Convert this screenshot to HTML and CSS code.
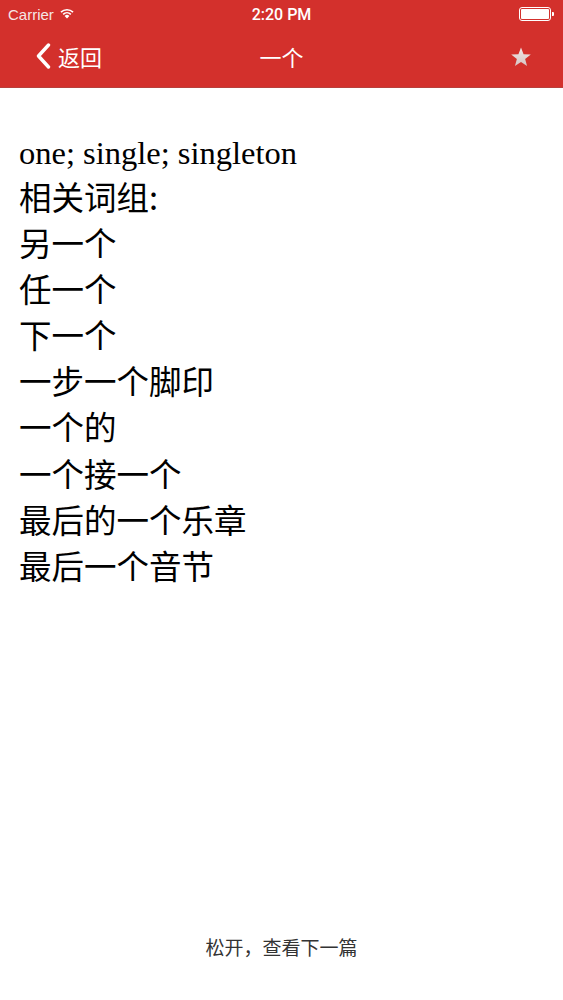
FILE: index.html
```html
<!DOCTYPE html>
<html lang="zh">
<head>
<meta charset="utf-8">
<link rel="stylesheet" href="styles.css">
</head>
<body>
<div class="page">
  <header class="header">
    <div class="status">
      <div class="status-left">Carrier
        <svg class="wifi" width="16" height="12" viewBox="0 0 16 12"><path d="M8 11.5 L5.6 8.9 A3.4 3.4 0 0 1 10.4 8.9 Z" fill="#fff"/><path d="M3.6 6.8 A6.3 6.3 0 0 1 12.4 6.8 L11.3 7.9 A4.8 4.8 0 0 0 4.7 7.9 Z" fill="#fff"/><path d="M1.4 4.6 A9.4 9.4 0 0 1 14.6 4.6 L13.5 5.7 A7.9 7.9 0 0 0 2.5 5.7 Z" fill="#fff"/></svg>
      </div>
      <div class="status-time">2:20 PM</div>
      <div class="status-right">
        <div class="battery"><div class="battery-fill"></div></div><div class="battery-tip"></div>
      </div>
    </div>
    <nav class="nav">
      <div class="back">
        <svg width="15" height="26" viewBox="0 0 15 26"><path d="M12.5 2 L2.5 13 L12.5 24" fill="none" stroke="#fff" stroke-width="3.4" stroke-linecap="round" stroke-linejoin="round"/></svg>
        <span>返回</span>
      </div>
      <div class="title">一个</div>
      <div class="star">
        <svg width="22" height="22" viewBox="0 0 24 24"><defs><linearGradient id="sg" x1="0" y1="0" x2="0" y2="1"><stop offset="0" stop-color="#f2e6e6"/><stop offset="1" stop-color="#d6c4c4"/></linearGradient></defs><path d="M12 1.5 L14.8 8.9 L22.7 9.2 L16.5 14.1 L18.6 21.8 L12 17.4 L5.4 21.8 L7.5 14.1 L1.3 9.2 L9.2 8.9 Z" fill="url(#sg)"/></svg>
      </div>
    </nav>
  </header>
  <main class="content">
    <div class="en">one; single; singleton</div>
    <div class="zh">相关词组:</div>
    <div class="zh">另一个</div>
    <div class="zh">任一个</div>
    <div class="zh">下一个</div>
    <div class="zh">一步一个脚印</div>
    <div class="zh">一个的</div>
    <div class="zh">一个接一个</div>
    <div class="zh">最后的一个乐章</div>
    <div class="zh">最后一个音节</div>
  </main>
  <footer class="footer">松开，查看下一篇</footer>
</div>
</body>
</html>
```
FILE: styles.css
```css
html, body {
  margin: 0;
  padding: 0;
  background: #fff;
}
.page {
  width: 563px;
  height: 1000px;
  display: flex;
  flex-direction: column;
  font-family: "Noto Sans CJK SC", "Liberation Sans", sans-serif;
}
.header {
  background: #d3302c;
  height: 87px;
  color: #fff;
  display: flex;
  flex-direction: column;
  border-bottom: 1px solid #b8403c;
}
.status {
  height: 28px;
  display: flex;
  align-items: center;
  justify-content: space-between;
  padding: 0 9px 0 8px;
  font-family: "Liberation Sans", "Noto Sans", sans-serif;
  font-size: 15px;
  position: relative;
}
.status-left {
  display: flex;
  align-items: center;
  gap: 5px;
  color: #f6e6e6;
}
.wifi { margin-top: -2px; }
.status-time {
  position: absolute;
  left: 0;
  right: 0;
  text-align: center;
  font-family: Roboto, "Liberation Sans", sans-serif;
  font-size: 16px;
  font-weight: 500;
  pointer-events: none;
}
.status-right {
  display: flex;
  align-items: center;
}
.battery {
  width: 28px;
  height: 10px;
  border: 1px solid #fff;
  border-radius: 3px;
  padding: 1px;
  box-sizing: content-box;
}
.battery-fill {
  width: 100%;
  height: 100%;
  background: #fff;
  border-radius: 1px;
}
.battery-tip {
  width: 2px;
  height: 4px;
  background: #fff;
  margin-left: 1px;
  border-radius: 0 1px 1px 0;
}
.nav {
  flex: 1;
  display: flex;
  align-items: center;
  justify-content: space-between;
  padding: 0 31px 4px 36px;
  position: relative;
}
.back {
  display: flex;
  align-items: center;
  gap: 7px;
  font-size: 22px;
}
.back svg { margin-top: 1px; }
.title {
  position: absolute;
  left: 0;
  right: 0;
  text-align: center;
  font-size: 22px;
  pointer-events: none;
}
.star {
  display: flex;
  align-items: center;
  margin-top: 2px;
}
.content {
  flex: 1;
  padding: 45px 19px 0;
  color: #000;
}
.en {
  font-family: "Liberation Serif", serif;
  font-size: 32.5px;
  line-height: 40px;
}
.zh {
  font-family: "Noto Sans CJK SC", sans-serif;
  font-size: 32.5px;
  line-height: 46.1px;
}
.footer {
  text-align: center;
  font-size: 19px;
  color: #333;
  padding-bottom: 40px;
}
```
